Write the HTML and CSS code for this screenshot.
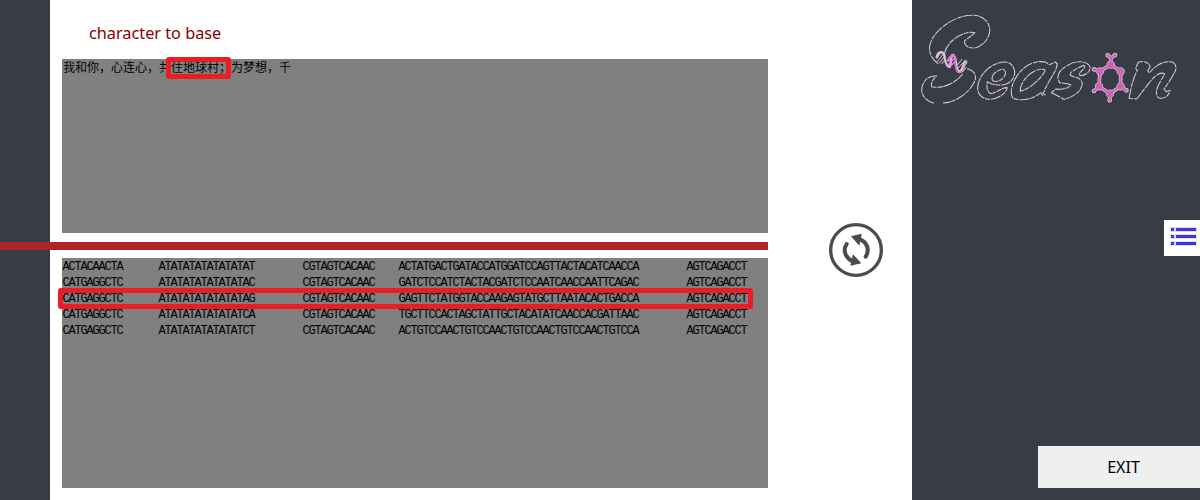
FILE: index.html
```html
<!DOCTYPE html>
<html lang="en">
<head>
<meta charset="utf-8">
<title>Season</title>
<link rel="stylesheet" href="styles.css">
</head>
<body>
<div class="app">
  <aside class="rail"></aside>
  <main class="workspace">
    <div class="editor">
      <h1 class="title">character to base</h1>
      <section class="panel source">我和你，心连心，共住地球村；为梦想，千<span class="mark mark-text"></span></section>
      <div class="divider"></div>
      <section class="panel result"><pre class="bases">ACTACAACTA      ATATATATATATATAT        CGTAGTCACAAC    ACTATGACTGATACCATGGATCCAGTTACTACATCAACCA        AGTCAGACCT
CATGAGGCTC      ATATATATATATATAC        CGTAGTCACAAC    GATCTCCATCTACTACGATCTCCAATCAACCAATTCAGAC        AGTCAGACCT
CATGAGGCTC      ATATATATATATATAG        CGTAGTCACAAC    GAGTTCTATGGTACCAAGAGTATGCTTAATACACTGACCA        AGTCAGACCT
CATGAGGCTC      ATATATATATATATCA        CGTAGTCACAAC    TGCTTCCACTAGCTATTGCTACATATCAACCACGATTAAC        AGTCAGACCT
CATGAGGCTC      ATATATATATATATCT        CGTAGTCACAAC    ACTGTCCAACTGTCCAACTGTCCAACTGTCCAACTGTCCA        AGTCAGACCT</pre><span class="mark mark-row"></span></section>
    </div>
    <div class="convert">
      <svg width="56" height="56" viewBox="0 0 168 168">
        <circle cx="84" cy="84" r="76" fill="none" stroke="#4b4b4b" stroke-width="10"/>
        <path d="M56 66C43 86 53 109 75 118M113 104C127 81 116 59 93 51" fill="none" stroke="#4b4b4b" stroke-width="12" stroke-linecap="round"/>
        <path d="M69 43L101 35L94 71ZM100 124L67 131L75 97Z" fill="#4b4b4b"/>
      </svg>
    </div>
  </main>
  <aside class="side">
    <svg class="logo" width="288" height="115" viewBox="6 0 864 345">
      <g class="outline">
        <path d="M84 191C68 180 54 158 60 134C68 95 130 46 184 46C220 43 242 70 239 94C236 124 207 146 188 144C171 142 162 136 164 122L183 108L195 98C176 94 151 101 129 120C109 138 101 154 105 172"/>
        <path d="M72 310C43 302 32 281 36 260C42 239 58 226 80 228C68 238 61 250 65 260C94 267 133 253 158 222M171 206C195 211 201 230 194 244C179 279 133 309 99 309"/>
        <path d="M203 263C205 219 251 184 287 186C312 190 321 217 308 237C294 257 270 258 245 252L232 245C229 261 231 275 242 281C262 278 277 261 292 263C286 285 257 299 235 298C215 295 203 284 203 263ZM247 241C242 223 261 211 278 207C293 212 287 230 272 240C263 246 254 246 247 241Z"/>
        <path d="M308 294C295 268 314 229 341 205C363 185 391 182 408 187L418 194L436 186L442 192L437 210L415 248L399 280L407 285M399 288L393 278C368 299 330 305 308 294M331 274C328 254 350 223 378 211C394 207 406 205 405 213C391 237 364 264 331 274Z"/>
      </g>
      <g class="outline" transform="translate(420 120)">
        <path d="M4 158L20 166L42 178C68 173 93 155 97 132C97 124 88 111 70 110L60 105L63 97L83 84L102 76L104 83L88 100L90 107C108 107 122 94 120 80C109 61 78 61 55 75C35 86 22 99 24 115L28 128L53 131L63 135L54 143L35 148L18 147L3 158"/>
        <path d="M237 175C244 137 251 111 262 91L257 85L265 67C283 60 299 69 300 81L293 93L298 99C316 76 341 61 366 66C379 71 380 85 375 95C364 116 351 136 342 147L349 155L360 151C356 170 341 179 325 173C312 159 323 137 334 119L344 102C329 92 308 114 294 133L260 177Z"/>
      </g>
      <g class="helix">
        <path class="strand-glow" d="M80 172C84 153 101 151 103 167C106 190 111 202 119 201C126 190 119 163 130 165C143 169 133 213 149 216C162 207 157 186 169 185"/>
        <path class="strand" d="M112 182C120 162 139 162 136 180C134 195 138 217 148 217C159 217 164 205 164 196"/>
        <path class="rungs" d="M81 174L94 157M82 185L103 158M88 190L104 169M96 191L104 180M142 195L156 178M142 207L166 180M146 217L170 190M157 216L168 203"/>
        <path class="rungs-pink" d="M114 184L132 166M115 194L136 172M119 201L136 184"/>
      </g>
      <g class="molecule" transform="translate(420 120)">
        <g class="halo">
          <path d="M182 74L212 94L212 139L180 161L147 139L150 94ZM182 74L183 54L173 46M183 54L195 45M150 94L132 88M212 139L229 151M147 139L132 153M180 161L179 181"/>
          <path class="halo-atoms" d="M182 74h.1M212 94h.1M212 139h.1M180 161h.1M147 139h.1M150 94h.1"/>
          <path class="halo-tips" d="M173 46h.1M195 45h.1M132 88h.1M229 151h.1M132 153h.1M179 181h.1"/>
        </g>
        <path class="bonds" d="M182 74L212 94L212 139L180 161L147 139L150 94ZM182 74L183 54L173 46M183 54L195 45M150 94L132 88M212 139L229 151M147 139L132 153M180 161L179 181"/>
        <g class="atoms">
          <circle cx="182" cy="74" r="10"/><circle cx="212" cy="94" r="10"/><circle cx="212" cy="139" r="10"/><circle cx="180" cy="161" r="10"/><circle cx="147" cy="139" r="10"/><circle cx="150" cy="94" r="10"/>
          <circle cx="173" cy="46" r="4"/><circle cx="195" cy="45" r="4"/><circle cx="132" cy="88" r="4"/><circle cx="229" cy="151" r="4"/><circle cx="132" cy="153" r="4"/><circle cx="179" cy="181" r="4"/>
        </g>
      </g>
    </svg>
    <button class="menu" aria-label="Menu">
      <svg width="36" height="36" viewBox="0 0 36 36">
        <path d="M6 7h27v5H6zM6 14h27v5H6zM6 21h27v5H6z" fill="#dedcfa"/>
        <path d="M7 8h3v3H7zM12 8h20v3H12zM7 15h3v3H7zM12 15h20v3H12zM7 22h3v3H7zM12 22h20v3H12z" fill="#3a35dc"/>
      </svg>
    </button>
    <button class="exit">EXIT</button>
  </aside>
</div>
</body>
</html>
```
FILE: styles.css
```css
* { box-sizing: border-box; }
body { margin: 0; background: #fff; }
.app { display: grid; grid-template-columns: 50px 862px 288px; height: 500px; overflow: hidden; }
.rail, .side { background: #383c45; }
.workspace { display: flex; }
.editor { width: 718px; padding-left: 12px; }
.title { margin: 0; height: 59px; padding: 20px 0 0 27px; font: 400 16.25px/26px "Noto Sans", sans-serif; color: #8b0000; white-space: nowrap; }
.panel { position: relative; background: #808080; color: #000; }
.source { height: 174px; padding-left: 1px; font: 12px/16px "Noto Sans CJK SC", sans-serif; white-space: nowrap; }
.divider { position: relative; height: 8px; margin: 9px 0 8px -62px; background: #ac2626; }
.result { height: 230px; padding: 1px 0 0 0.5px; }
.bases { margin: 0; font: 12px/16px "Liberation Mono", monospace; letter-spacing: -1.201px; }
.mark { position: absolute; border: 5px solid #ed1c24; border-radius: 3px; }
.mark-text { left: 104px; top: -2px; width: 65px; height: 22px; }
.mark-row { left: -4px; top: 30px; width: 695px; height: 21px; }
.convert { flex: 1; display: flex; align-items: center; padding: 0 0 1px 60px; }
.side { display: flex; flex-direction: column; align-items: flex-end; }
.logo { display: block; flex: none; }
.outline { fill: none; stroke: #d8c9da; stroke-width: 3.2; stroke-linejoin: round; stroke-dasharray: 30 3 15 2; }
.helix { fill: none; stroke-linecap: round; }
.strand-glow { stroke: #d9c5d9; stroke-width: 7; }
.strand { stroke: #d96bc9; stroke-width: 5; }
.rungs { stroke: #d9c5d9; stroke-width: 3; }
.rungs-pink { stroke: #e58ada; stroke-width: 4; }
.molecule { fill: none; stroke: #cc63b5; stroke-width: 6; }
.halo { stroke: #d5bdd3; stroke-width: 11; stroke-linecap: round; }
.halo-atoms { stroke-width: 25; }
.halo-tips { stroke-width: 14; }
.atoms { fill: #cc63b5; stroke: none; }
.menu { width: 36px; height: 36px; margin-top: 105px; padding: 0; border: 0; background: #fff; }
.menu svg { display: block; }
.exit { width: 162px; height: 42px; margin-top: 190px; padding: 0 0 0 9px; border: 0; background: #efefef; color: #000; font: 16px/42px "Noto Sans", sans-serif; }
```
